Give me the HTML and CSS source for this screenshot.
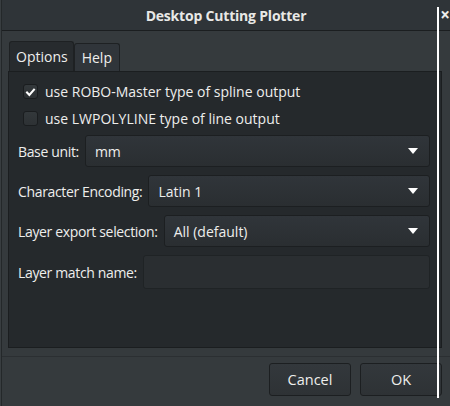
FILE: index.html
```html
<!DOCTYPE html>
<html>
<head>
<meta charset="utf-8">
<link rel="stylesheet" href="styles.css">
</head>
<body>
<div class="window">
  <div class="titlebar">
    <span class="title">Desktop Cutting Plotter</span>
    <span class="close">×</span>
  </div>
  <div class="content">
    <div class="tabs">
      <div class="tab active">Options</div>
      <div class="tab">Help</div>
    </div>
    <div class="panel">
      <div class="checks">
        <div class="check"><span class="box"><svg width="15" height="15" viewBox="0 0 15 15"><path d="M3.5 7.5 L6.2 10.3 L11.5 4.2" fill="none" stroke="#ffffff" stroke-width="2.4" stroke-linecap="square"/></svg></span><span>use ROBO-Master type of spline output</span></div>
        <div class="check"><span class="box"></span><span>use LWPOLYLINE type of line output</span></div>
      </div>
      <div class="row"><span class="label">Base unit:</span><div class="combo"><span>mm</span><span class="arrow"></span></div></div>
      <div class="row"><span class="label">Character Encoding:</span><div class="combo"><span>Latin 1</span><span class="arrow"></span></div></div>
      <div class="row"><span class="label">Layer export selection:</span><div class="combo"><span>All (default)</span><span class="arrow"></span></div></div>
      <div class="row"><span class="label">Layer match name:</span><div class="entry"></div></div>
    </div>
    <div class="sep"></div>
    <div class="buttons">
      <div class="btn">Cancel</div>
      <div class="btn">OK</div>
    </div>
  </div>
  <div class="vline"></div>
</div>
</body>
</html>
```
FILE: styles.css
```css
html, body {
  margin: 0;
  padding: 0;
  background: #383d40;
}
body {
  width: 450px;
  height: 406px;
  overflow: hidden;
  font-family: "Open Sans", "Noto Sans", sans-serif;
  font-size: 14px;
  color: #eeeeec;
}
.window {
  position: relative;
  width: 449px;
  height: 406px;
  margin-left: 1px;
  border-left: 1px solid #24282a;
  box-sizing: border-box;
  background: #353a3d;
}
.titlebar {
  height: 30px;
  background: #2f3438;
  border-bottom: 1px solid #1b1e20;
  display: flex;
  align-items: center;
  justify-content: center;
  position: relative;
}
.title {
  font-weight: bold;
  font-size: 14px;
  letter-spacing: -0.2px;
  color: #e8e8e6;
}
.close {
  position: absolute;
  right: 0;
  top: 5px;
  font-size: 17px;
  font-weight: bold;
  line-height: 20px;
  color: #eeeeec;
}
.content {
  padding: 10px 8px 0 6px;
}
.tabs {
  display: flex;
  align-items: flex-end;
  height: 30px;
  padding-left: 1px;
}
.tab {
  box-sizing: border-box;
  height: 28px;
  padding: 0 7px 0 7px;
  display: flex;
  align-items: center;
  border: 1px solid #1e2123;
  border-bottom: none;
  border-radius: 3px 3px 0 0;
  background: #30353a;
  font-size: 14px;
}
.tab.active {
  height: 30px;
  background: #272b2e;
  padding: 0 5px 0 6px;
}
.panel {
  box-sizing: border-box;
  height: 277px;
  background: #25292c;
  border: 1px solid #1b1e20;
  padding: 12px 11px 0 9px;
}
.checks {
  padding-left: 5px;
  display: flex;
  flex-direction: column;
  gap: 12px;
  margin-bottom: 9px;
}
.check {
  display: flex;
  align-items: center;
  gap: 7px;
  height: 15px;
}
.box {
  box-sizing: border-box;
  width: 15px;
  height: 15px;
  border: 1px solid #1a1d1f;
  border-radius: 3px;
  background: linear-gradient(#33383b, #2d3134);
  display: flex;
}
.row {
  display: flex;
  align-items: center;
  gap: 6px;
  margin-top: 8px;
}
.label {
  white-space: nowrap;
  letter-spacing: -0.35px;
}
.combo {
  flex: 1;
  box-sizing: border-box;
  height: 32px;
  border: 1px solid #1c1f21;
  border-radius: 3px;
  background: linear-gradient(#30353a, #2a2e31);
  display: flex;
  align-items: center;
  justify-content: space-between;
  padding: 0 11px 0 9px;
}
.arrow {
  width: 0;
  height: 0;
  border-left: 5px solid transparent;
  border-right: 5px solid transparent;
  border-top: 6px solid #ffffff;
}
.entry {
  flex: 1;
  box-sizing: border-box;
  height: 34px;
  border: 1px solid #1f2325;
  border-radius: 3px;
  background: #2a2e31;
}
.sep {
  margin: 8px -8px 0 -6px;
  height: 1px;
  background: #2b2f32;
}
.buttons {
  display: flex;
  justify-content: flex-end;
  gap: 9px;
  margin-top: 6px;
}
.btn {
  box-sizing: border-box;
  width: 82px;
  height: 33px;
  border: 1px solid #1c1f21;
  border-radius: 3px;
  background: linear-gradient(#33383c, #2e3235);
  display: flex;
  align-items: center;
  justify-content: center;
  font-size: 14.5px;
}
.vline {
  position: absolute;
  left: 435px;
  top: 7px;
  width: 2px;
  height: 391px;
  background: #ffffff;
}
```
